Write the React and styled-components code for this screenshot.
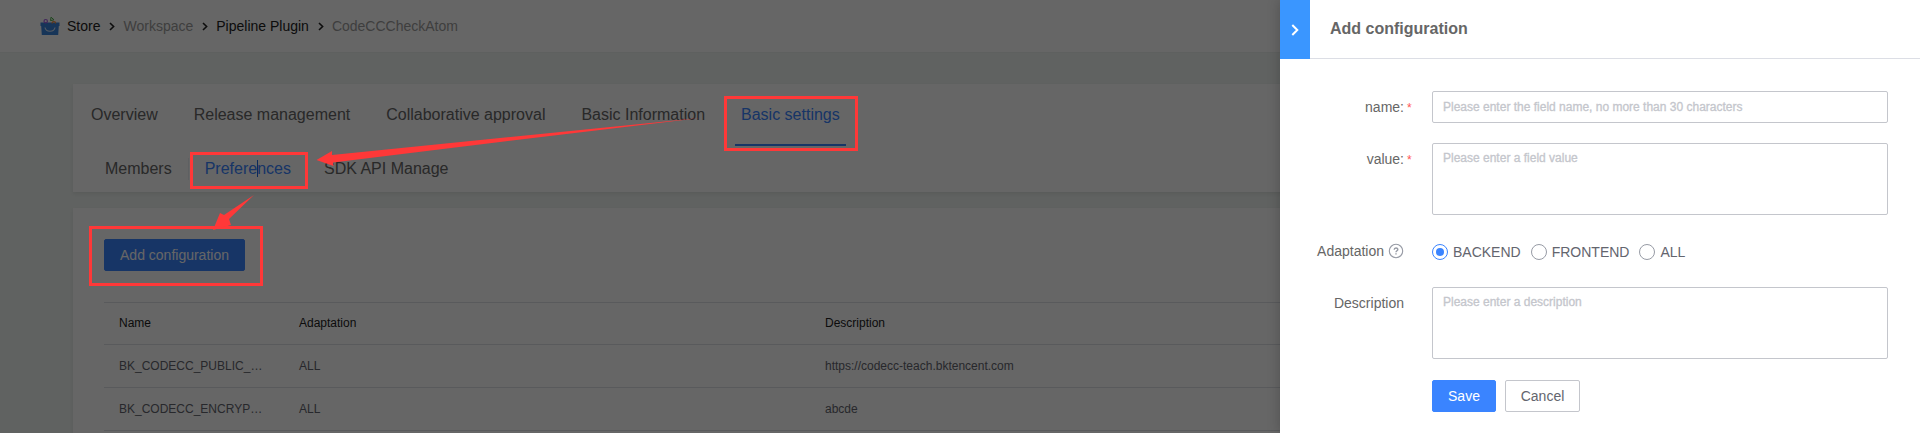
import React from "react";
import styled, { createGlobalStyle } from "styled-components";

const Global = createGlobalStyle`
  * { box-sizing: border-box; }
  html, body { margin: 0; padding: 0; overflow: hidden; }
  body { font-family: "Liberation Sans", Arial, sans-serif; font-size: 14px; color: #666; }
`;

const Screen = styled.div`
  position: relative;
  width: 1920px;
  height: 433px;
  overflow: hidden;
  background: #f0f5f2;
`;
const Header = styled.header`
  display: flex;
  align-items: center;
  height: 53px;
  padding: 0 0 0 40px;
  background: #fff;
  border-bottom: 1px solid #ecf0ee;
`;
const StoreIcon = styled.svg`
  width: 20px;
  height: 20px;
  margin-right: 7px;
`;
const Crumb = styled.span`
  line-height: 16px;
  color: ${(p) => (p.$muted ? "#9c9c9c" : "#222")};
`;
const Chevron = styled.svg`
  width: 23px;
  height: 16px;
  flex: none;
`;
const Main = styled.main`
  display: flex;
  flex-direction: column;
  gap: 16px;
  padding: 31px 73px 0;
`;
const Card = styled.section`
  background: #fff;
  box-shadow: 0 2px 4px rgba(0, 0, 0, 0.08);
`;
const NavCard = styled(Card)`
  height: 108px;
`;
const Tabs = styled.nav`
  display: flex;
  gap: 24px;
  height: 62px;
  padding-left: 12px;
  font-size: 16px;
`;
const Tab = styled.span`
  padding: 0 6px;
  line-height: 61px;
  height: 62px;
  color: ${(p) => (p.$active ? "#3a84ff" : "#666")};
  border-bottom: 2px solid ${(p) => (p.$active ? "#3a84ff" : "transparent")};
`;
const SubTabs = styled.nav`
  display: flex;
  align-items: center;
  height: 46px;
  padding: 0 0 1px 16px;
  font-size: 16px;
`;
const SubTab = styled.span`
  padding: 0 16px;
  line-height: 22px;
  color: ${(p) => (p.$active ? "#3a84ff" : "#666")};
  border-right: 1px solid ${(p) => (p.$last ? "transparent" : "#ebf0f5")};
`;
const ConfigCard = styled(Card)`
  height: 260px;
  padding: 31px 31px 0;
`;
const Button = styled.button`
  height: 32px;
  width: ${(p) => p.$width}px;
  padding: 0;
  border: 1px solid ${(p) => (p.$primary ? "#3a84ff" : "#c4c6cc")};
  border-radius: 2px;
  background: ${(p) => (p.$primary ? "#3a84ff" : "#fff")};
  color: ${(p) => (p.$primary ? "#fff" : "#63656e")};
  font: 14px/30px "Liberation Sans", Arial, sans-serif;
`;
const Table = styled.div`
  margin-top: 31px;
  border-top: 1px solid #dfe0e5;
  font-size: 12px;
`;
const Row = styled.div`
  display: grid;
  grid-template-columns: 180px 526px 1fr;
  align-items: center;
  height: ${(p) => (p.$head ? 42 : 43)}px;
  padding-bottom: ${(p) => (p.$head ? 2 : 1)}px;
  border-bottom: 1px solid #dfe0e5;
  color: ${(p) => (p.$head ? "#222" : "#63656e")};
`;
const Cell = styled.div`
  padding: 0 15px;
  white-space: nowrap;
`;
const Mask = styled.div`
  position: absolute;
  inset: 0;
  background: rgba(0, 0, 0, 0.6);
`;
const Drawer = styled.aside`
  position: absolute;
  top: 0;
  right: 0;
  width: 640px;
  height: 433px;
  background: #fff;
  box-shadow: 0 0 12px rgba(0, 0, 0, 0.22);
`;
const DrawerHead = styled.div`
  display: flex;
  height: 59px;
`;
const Collapse = styled.div`
  width: 30px;
  height: 59px;
  padding-top: 22px;
  background: #3a96ff;
`;
const DrawerTitle = styled.div`
  flex: 1;
  padding-left: 20px;
  border-bottom: 1px solid #dcdee5;
  font-size: 16px;
  font-weight: 700;
  line-height: 57px;
`;
const Form = styled.div`
  display: flex;
  flex-direction: column;
  gap: 20px;
  padding: 32px 32px 0 0;
`;
const Field = styled.div`
  display: flex;
`;
const Label = styled.div`
  display: flex;
  justify-content: flex-end;
  width: 124px;
  margin-right: 28px;
  height: 32px;
  line-height: 32px;
`;
const Required = styled.span`
  width: 8px;
  margin: 1px -11px 0 3px;
  font-size: 12px;
  line-height: 32px;
  color: #ff5656;
`;
const Input = styled.input`
  flex: 1;
  height: 32px;
  padding: 0 10px;
  border: 1px solid #c4c6cc;
  border-radius: 2px;
  outline: none;
  font: 12px "Liberation Sans", Arial, sans-serif;
  &::placeholder { color: #c4c6cc; -webkit-text-stroke: 0.3px #c4c6cc; }
`;
const TextArea = styled.textarea`
  flex: 1;
  height: 72px;
  padding: 7px 10px;
  border: 1px solid #c4c6cc;
  border-radius: 2px;
  outline: none;
  resize: none;
  font: 12px/14px "Liberation Sans", Arial, sans-serif;
  &::placeholder { color: #c4c6cc; -webkit-text-stroke: 0.3px #c4c6cc; }
`;
const HelpIcon = styled.svg`
  width: 16px;
  height: 16px;
  margin: 8px 0 0 4px;
`;
const Radios = styled.div`
  display: flex;
  align-items: center;
  height: 32px;
  padding-top: 2px;
  gap: 10px;
  color: #63656e;
`;
const Radio = styled.label`
  display: flex;
  align-items: center;
  gap: 5px;
  line-height: 16px;
`;
const Dot = styled.span`
  display: flex;
  align-items: center;
  justify-content: center;
  width: 16px;
  height: 16px;
  border: 1px solid ${(p) => (p.$on ? "#3a84ff" : "#979ba5")};
  border-radius: 50%;
  &::after {
    content: "";
    width: 8px;
    height: 8px;
    border-radius: 50%;
    background: ${(p) => (p.$on ? "#3a84ff" : "transparent")};
  }
`;
const Actions = styled.div`
  display: flex;
  gap: 9px;
  padding: 1px 0 0 152px;
`;
const Annotations = styled.svg`
  position: absolute;
  left: 0;
  top: 0;
`;

const Sep = () => (
  <Chevron viewBox="0 0 23 16" fill="none" stroke="#222" strokeWidth="1.6">
    <path d="M10 5 L13.6 8.5 L10 12" />
  </Chevron>
);

const rows = [
  ["BK_CODECC_PUBLIC_…", "ALL", "https://codecc-teach.bktencent.com"],
  ["BK_CODECC_ENCRYP…", "ALL", "abcde"],
];

export default function App() {
  return (
    <Screen>
      <Global />
      <Header>
        <StoreIcon viewBox="0 0 20 20" fill="none">
          <path d="M0.5 6.5H19.5V10H18.8L18.2 19H1.8L1.2 10H0.5Z" fill="#3a84dd" />
          <path d="M5 11.5C6 16.5 14 16.5 15 11.5" stroke="#d5e2f5" strokeWidth="1.2" />
          <circle cx="5.7" cy="5.2" r="1.7" stroke="#a35fe0" strokeWidth="1.2" />
          <path d="M11 1.2L14 3.8L10.5 4.6Z" stroke="#4db34d" strokeWidth="1" />
          <path d="M12 7.5a1.8 1.8 0 0 1 3.6 0" stroke="#f08a3c" strokeWidth="1.2" />
        </StoreIcon>
        <Crumb>Store</Crumb>
        <Sep />
        <Crumb $muted>Workspace</Crumb>
        <Sep />
        <Crumb>Pipeline Plugin</Crumb>
        <Sep />
        <Crumb $muted>CodeCCCheckAtom</Crumb>
      </Header>
      <Main>
        <NavCard>
          <Tabs>
            <Tab>Overview</Tab>
            <Tab>Release management</Tab>
            <Tab>Collaborative approval</Tab>
            <Tab>Basic Information</Tab>
            <Tab $active>Basic settings</Tab>
          </Tabs>
          <SubTabs>
            <SubTab>Members</SubTab>
            <SubTab $active>Preferences</SubTab>
            <SubTab $last>SDK API Manage</SubTab>
          </SubTabs>
        </NavCard>
        <ConfigCard>
          <Button $primary $width={141}>Add configuration</Button>
          <Table>
            <Row $head>
              <Cell>Name</Cell>
              <Cell>Adaptation</Cell>
              <Cell>Description</Cell>
            </Row>
            {rows.map((r) => (
              <Row key={r[0]}>
                {r.map((c) => (
                  <Cell key={c}>{c}</Cell>
                ))}
              </Row>
            ))}
          </Table>
        </ConfigCard>
      </Main>
      <Mask />
      <Drawer>
        <DrawerHead>
          <Collapse>
            <svg width="30" height="16" viewBox="0 0 30 16" fill="none" stroke="#fff" strokeWidth="2">
              <path d="M12.3 3 L17.3 8 L12.3 13" />
            </svg>
          </Collapse>
          <DrawerTitle>Add configuration</DrawerTitle>
        </DrawerHead>
        <Form>
          <Field>
            <Label>name:<Required>*</Required></Label>
            <Input placeholder="Please enter the field name, no more than 30 characters" />
          </Field>
          <Field>
            <Label>value:<Required>*</Required></Label>
            <TextArea placeholder="Please enter a field value" />
          </Field>
          <Field>
            <Label>
              Adaptation
              <HelpIcon viewBox="0 0 16 16" fill="none" stroke="#979ba5">
                <circle cx="8" cy="8" r="6.7" strokeWidth="1.1" />
                <path d="M6.2 6.7C6.2 4.4 9.8 4.4 9.8 6.5C9.8 7.8 8 7.8 8 9.3M8 10.3V11.6" strokeWidth="1.4" />
              </HelpIcon>
            </Label>
            <Radios>
              <Radio><Dot $on />BACKEND</Radio>
              <Radio><Dot />FRONTEND</Radio>
              <Radio><Dot />ALL</Radio>
            </Radios>
          </Field>
          <Field>
            <Label>Description</Label>
            <TextArea placeholder="Please enter a description" />
          </Field>
          <Actions>
            <Button $primary $width={64}>Save</Button>
            <Button $width={75}>Cancel</Button>
          </Actions>
        </Form>
      </Drawer>
      <Annotations width="1280" height="433" viewBox="0 0 1280 433" fill="none">
        <path d="M257.5 160V177" stroke="#0b2a5c" />
        <g stroke="#ff3838" strokeWidth="3">
          <rect x="725.5" y="97.5" width="131" height="52" />
          <rect x="191.5" y="153.5" width="115" height="34" />
          <rect x="90.5" y="227.5" width="171" height="57" />
        </g>
        <g fill="#ff3838">
          <path d="M316.5 160L332 151V155L500 138L700 118L500 142L333 162.5L333.5 166Z" />
          <path d="M254 195L229 219L231 225L213 230L220 213L224 215Z" />
        </g>
      </Annotations>
    </Screen>
  );
}
